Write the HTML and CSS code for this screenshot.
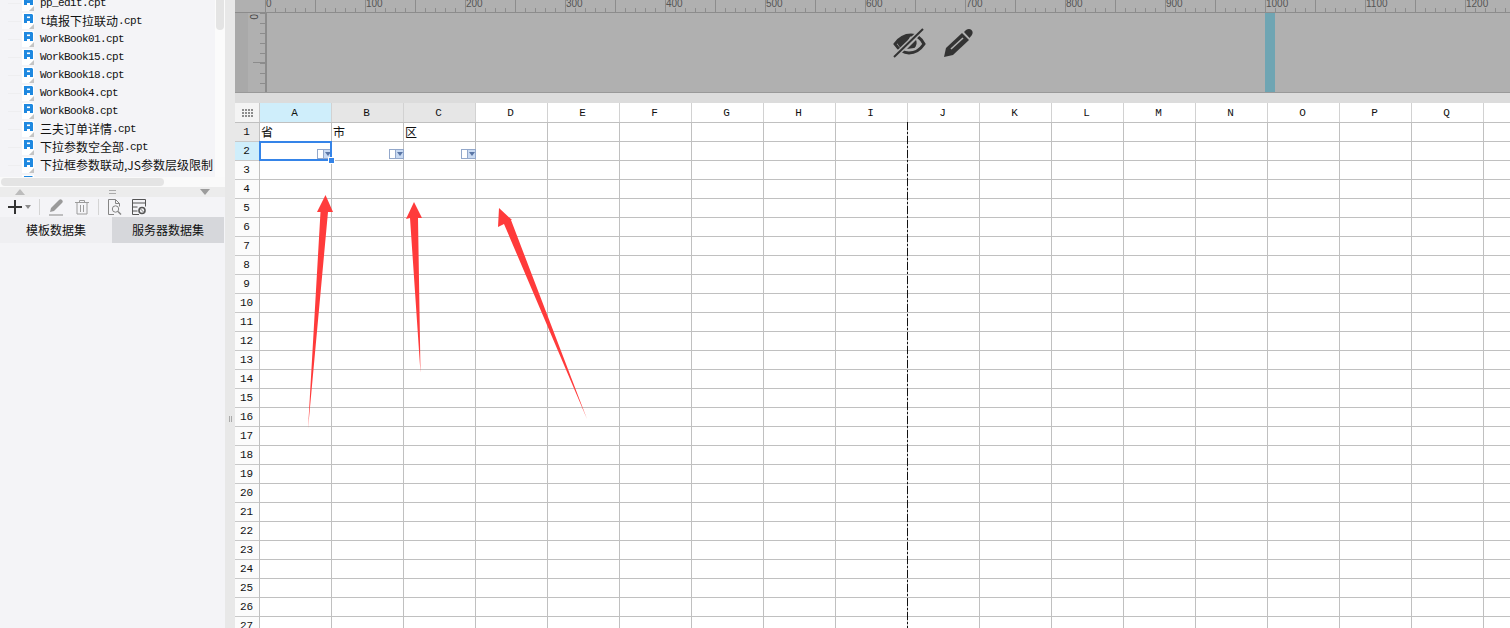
FILE: index.html
```html
<!DOCTYPE html>
<html lang="zh-CN">
<head>
  <meta charset="UTF-8">
  <title>模板设计器</title>
  <link rel="stylesheet" href="styles.css">
</head>
<body>

<svg class="defs" width="0" height="0">
  <symbol id="cpt" viewBox="0 0 12 16">
    <path d="M0 0h12v11l-5 5H0z" fill="#fff"/>
    <path d="M7 16l5-5v5z" fill="#c4c4c4"/>
    <path d="M2 1h8l1 1v8H8V8H5v2H2z" fill="#1e88e0"/>
    <rect x="5" y="3.500" width="3" height="1.600" fill="#fff"/>
  </symbol>
</svg>

<aside class="side">
  <div class="tree">
    <ul class="files">
      <li><svg class="file-icon"><use href="#cpt"/></svg><span class="lat">pp_edit.cpt</span></li>
      <li><svg class="file-icon"><use href="#cpt"/></svg><span class="lat">t</span>填报下拉联动<span class="lat">.cpt</span></li>
      <li><svg class="file-icon"><use href="#cpt"/></svg><span class="lat">WorkBook01.cpt</span></li>
      <li><svg class="file-icon"><use href="#cpt"/></svg><span class="lat">WorkBook15.cpt</span></li>
      <li><svg class="file-icon"><use href="#cpt"/></svg><span class="lat">WorkBook18.cpt</span></li>
      <li><svg class="file-icon"><use href="#cpt"/></svg><span class="lat">WorkBook4.cpt</span></li>
      <li><svg class="file-icon"><use href="#cpt"/></svg><span class="lat">WorkBook8.cpt</span></li>
      <li><svg class="file-icon"><use href="#cpt"/></svg>三夫订单详情<span class="lat">.cpt</span></li>
      <li><svg class="file-icon"><use href="#cpt"/></svg>下拉参数空全部<span class="lat">.cpt</span></li>
      <li><svg class="file-icon"><use href="#cpt"/></svg>下拉框参数联动,JS参数层级限制</li>
      <li><svg class="file-icon"><use href="#cpt"/></svg>下拉框参数联动,参数层级限制详情</li>
    </ul>
    <div class="vscroll"><div class="vthumb"></div></div>
  </div>
  <div class="hscroll"><div class="hthumb"></div></div>

  <div class="fold">
    <span class="tri-up"></span>
    <span class="grip"></span>
    <span class="tri-down"></span>
  </div>

  <div class="tools">
    <svg class="tool" width="16" height="16" viewBox="0 0 16 16"><path d="M8 1v14M1 8h14" stroke="#333" stroke-width="2" fill="none"/></svg>
    <span class="caret"></span>
    <span class="tool-sep"></span>
    <svg class="tool" width="18" height="18" viewBox="0 0 18 18"><path d="M2 14l1-4 8-8c1-1 2-1 3 0s1 2 0 3l-8 8z" fill="#9a9a9a"/><path d="M1 17h14" stroke="#9a9a9a" stroke-width="1.200"/></svg>
    <svg class="tool" width="16" height="16" viewBox="0 0 16 16" fill="none" stroke="#9c9c9c"><path d="M1 3.500h14M5.500 3.500v-2h5v2M3 3.500v11.500h10V3.500M6.500 6v7M9.500 6v7"/></svg>
    <span class="tool-sep"></span>
    <svg class="tool" width="16" height="16" viewBox="0 0 16 16" fill="none" stroke="#858585"><path d="M7 15.500H1.500V.5h7l4 4v3M8.500.5v4h4"/><circle cx="8.500" cy="10" r="3.200"/><path d="M11 12.500l3 3" stroke-width="1.500"/></svg>
    <svg class="tool" width="16" height="16" viewBox="0 0 16 16" fill="none" stroke="#555"><path d="M8 15.500H1.500V.5h13v7M1.500 4h13M1.500 8h5M1.500 12h5"/><circle cx="11" cy="11.500" r="3" stroke-width="1.600"/><path d="M9 9.500l4 4" stroke="#777"/></svg>
  </div>

  <div class="tabs">
    <div class="tab">模板数据集</div>
    <div class="tab tab-on">服务器数据集</div>
  </div>
</aside>

<div class="split"><span class="split-grip"></span></div>

<main class="main">
  <section class="designer">
    <div class="ruler-h">
      <div class="ruler-track">
        <span>0</span><span>100</span><span>200</span><span>300</span><span>400</span><span>500</span><span>600</span>
        <span>700</span><span>800</span><span>900</span><span>1000</span><span>1100</span><span>1200</span>
      </div>
    </div>
    <div class="stage">
      <div class="gutter"></div>
      <div class="ruler-v"><span>0</span></div>
      <div class="canvas">
        <svg width="33" height="30" viewBox="0 0 33 30">
          <path d="M2 16C7 9 13 7 18 7c6 0 10 3 13 9-4 6-9 9-15 9-6 0-10-3-14-9z" fill="none" stroke="#333" stroke-width="3"/>
          <path d="M4 15c4-5 8-7 14-8l-8 15c-3-2-4-4-6-7z" fill="#333"/>
          <path d="M23 12c1 2 1 6-2 8l-7 1z" fill="#333"/>
          <path d="M1 29L30 1" stroke="#b0b0b0" stroke-width="5"/>
          <path d="M1 29L30 1" stroke="#333" stroke-width="2"/>
        </svg>
        <svg width="32" height="30" viewBox="0 0 32 30">
          <path d="M0 29l2-9L18 5l7 7L9 27z" fill="#333"/>
          <path d="M7 21L19 10" stroke="#b0b0b0" stroke-width="1.600"/>
          <path d="M20 4l2-2c2-1.500 4-1.500 5.500 0s1.500 3.500 0 5.500l-2 2.500z" fill="#333"/>
        </svg>
      </div>
      <div class="paper-edge"></div>
      <div class="canvas-rest"></div>
    </div>
  </section>

  <div class="band"></div>

  <section class="sheet">
    <div class="col-heads">
      <div class="corner"><span class="dots"></span></div>
      <div class="col col-on">A</div>
      <div class="col col-used">B</div>
      <div class="col col-used">C</div>
      <div class="col">D</div><div class="col">E</div><div class="col">F</div><div class="col">G</div>
      <div class="col">H</div><div class="col">I</div><div class="col">J</div><div class="col">K</div>
      <div class="col">L</div><div class="col">M</div><div class="col">N</div><div class="col">O</div>
      <div class="col">P</div><div class="col">Q</div><div class="col">R</div>
    </div>
    <div class="sheet-body">
      <div class="row-heads">
        <div class="row row-used">1</div>
        <div class="row row-on">2</div>
        <div class="row">3</div><div class="row">4</div><div class="row">5</div><div class="row">6</div>
        <div class="row">7</div><div class="row">8</div><div class="row">9</div><div class="row">10</div>
        <div class="row">11</div><div class="row">12</div><div class="row">13</div><div class="row">14</div>
        <div class="row">15</div><div class="row">16</div><div class="row">17</div><div class="row">18</div>
        <div class="row">19</div><div class="row">20</div><div class="row">21</div><div class="row">22</div>
        <div class="row">23</div><div class="row">24</div><div class="row">25</div><div class="row">26</div>
        <div class="row">27</div>
      </div>
      <div class="cells">
        <div class="cell">省</div>
        <div class="cell">市</div>
        <div class="cell">区</div>
        <div class="cell cell-new"><span class="combo"><i></i><b></b></span></div>
        <div class="cell"><span class="combo"><i></i><b></b></span></div>
        <div class="cell"><span class="combo"><i></i><b></b></span></div>

        <div class="page-break"></div>
        <div class="selected"><span class="handle"></span></div>
      </div>
    </div>
  </section>
</main>

<svg class="arrows" width="1510" height="628" viewBox="0 0 1510 628">
  <path d="M308 429L320.500 212L317 212L325.500 195L333 212L328 212Z" fill="#ff3b3b"/>
  <path d="M420.500 373L410 218L406 219L414 202L422 218L418 218Z" fill="#ff3b3b"/>
  <path d="M587 419L504 224L498 227L499 208L512 220L511 220Z" fill="#ff3b3b"/>
</svg>

</body>
</html>
```

FILE: styles.css
```css
* {
  box-sizing: border-box;
}

html, body {
  height: 100%;
}

body {
  margin: 0;
  display: flex;
  height: 628px;
  overflow: hidden;
  background: #f4f4f7;
  color: #111;
  font-family: "Noto Sans CJK SC", sans-serif;
  font-size: 12px;
}

.defs {
  position: absolute;
}

/* left panel */
.side {
  width: 225px;
  flex: none;
  display: flex;
  flex-direction: column;
}

.tree {
  height: 177px;
  display: flex;
  overflow: hidden;
}

.files {
  list-style: none;
  margin: -6px 0 0;
  padding: 0;
  flex: 1;
  min-width: 0;
  white-space: nowrap;
  overflow: hidden;
}

.files li {
  height: 18px;
  line-height: 18px;
  display: flex;
  align-items: center;
  padding-left: 22px;
  background: linear-gradient(#eeeef0, #eeeef0) 8px 9px / 13px 1px no-repeat;
}

.file-icon {
  width: 12px;
  height: 16px;
  margin-right: 6px;
  flex: none;
}

.lat {
  font-family: "Liberation Mono", monospace;
  font-size: 11px;
  letter-spacing: -0.6px;
}

.vscroll {
  width: 10px;
  flex: none;
  background: #fbfbfb;
  padding-left: 1px;
}

.vthumb {
  width: 8px;
  height: 30px;
  background: #e4e4e4;
  border-radius: 0 0 4px 4px;
}

.hscroll {
  height: 10px;
  background: #fafafa;
  padding: 1px 0 0 1px;
}

.hthumb {
  width: 163px;
  height: 8px;
  background: #e4e4e4;
  border-radius: 4px;
}

.fold {
  height: 10px;
  background: #ececec;
  display: flex;
  align-items: center;
  justify-content: space-between;
  padding: 0 15px;
}

.tri-up {
  border: 5px solid transparent;
  border-top: 0;
  border-bottom: 6px solid #bcbcbc;
}

.tri-down {
  border: 5px solid transparent;
  border-bottom: 0;
  border-top: 6px solid #9c9c9c;
}

.grip {
  width: 7px;
  height: 4px;
  border-top: 1px solid #aaa;
  border-bottom: 1px solid #aaa;
}

.tools {
  height: 20px;
  display: flex;
  align-items: center;
  padding-left: 7px;
}

.tool {
  flex: none;
}

.tool + .tool {
  margin-left: 8px;
}

.caret {
  border: 3px solid transparent;
  border-bottom: 0;
  border-top: 4px solid #8c8c8c;
  margin-left: 2px;
}

.tool-sep {
  width: 1px;
  height: 16px;
  background: #d4d4d4;
  margin: 0 8px;
}

.tool-sep + .tool {
  margin-left: 0;
}

.tabs {
  height: 26px;
  display: flex;
  width: 224px;
}

.tab {
  width: 112px;
  line-height: 26px;
  text-align: center;
  background: #efeff2;
}

.tab-on {
  background: #d6d7db;
}

.split {
  width: 10px;
  flex: none;
  background: #e8e8e8;
  display: flex;
  align-items: center;
  justify-content: center;
  padding-top: 209px;
}

.split-grip {
  width: 3px;
  height: 6px;
  border-left: 1px solid #aaa;
  border-right: 1px solid #aaa;
}

.main {
  flex: 1;
  min-width: 0;
  display: flex;
  flex-direction: column;
  overflow: hidden;
  background: #fff;
}

/* greyed out designer on top */
.designer {
  height: 93px;
  flex: none;
  background: #b0b0b0;
  border-bottom: 1px solid #999;
  display: flex;
  flex-direction: column;
}

.ruler-h {
  height: 13px;
  flex: none;
  padding-left: 30px;
  border-bottom: 1px solid #8c8c8c;
  overflow: hidden;
}

.ruler-track {
  display: flex;
  height: 12px;
  background:
    repeating-linear-gradient(90deg, #8c8c8c 0 1px, transparent 1px 50px) 0 0 / 100% 100% no-repeat,
    repeating-linear-gradient(90deg, #8c8c8c 0 1px, transparent 1px 10px) 0 100% / 100% 4px no-repeat;
}

.ruler-track span {
  width: 100px;
  flex: none;
  padding-left: 1px;
  font: 10px/8px "Liberation Sans", sans-serif;
  color: #555;
}

.stage {
  flex: 1;
  display: flex;
  min-height: 0;
}

.gutter {
  width: 13px;
  flex: none;
  background: #a9a9a9;
}

.ruler-v {
  width: 17px;
  flex: none;
  background:
    linear-gradient(#8c8c8c, #8c8c8c) 100% 49px / 12px 1px no-repeat,
    repeating-linear-gradient(#8c8c8c 0 1px, transparent 1px 10px) 100% 0 / 5px 100% no-repeat;
}

.ruler-v span {
  display: block;
  writing-mode: vertical-rl;
  font: 10px/10px "Liberation Sans", sans-serif;
  color: #444;
  padding-top: 1px;
}

.canvas {
  width: 1000px;
  flex: none;
  border-left: 2px solid #8c8c8c;
  display: flex;
  align-items: flex-start;
  gap: 18px;
  padding: 15px 0 0 626px;
}

.paper-edge {
  width: 10px;
  flex: none;
  background: #6fa5b3;
}

.canvas-rest {
  flex: 1;
}

.band {
  height: 10px;
  flex: none;
  background: #dcdcdc;
}

/* spreadsheet */
.sheet {
  flex: 1;
  min-height: 0;
  overflow: hidden;
}

.col-heads {
  display: flex;
  height: 20px;
  border-bottom: 1px solid #c0c0c0;
  font-family: "Liberation Mono", monospace;
  font-size: 11px;
}

.corner {
  width: 25px;
  flex: none;
  background: #f4f4f4;
  border-right: 1px solid #c8c8c8;
  display: flex;
  align-items: center;
  justify-content: center;
}

.dots {
  width: 11px;
  height: 8px;
  background: radial-gradient(circle at 1px 1px, #8c8c8c 1px, transparent 1.1px) 0 0 / 3px 3px;
}

.col {
  width: 72px;
  flex: none;
  line-height: 21px;
  text-align: center;
  padding-right: 2px;
  border-right: 1px solid #d2d2d2;
  background: #fff;
}

.col-on {
  background: #cfeefb;
}

.col-used {
  background: #e6e6e6;
}

.sheet-body {
  display: flex;
}

.row-heads {
  width: 25px;
  flex: none;
  border-right: 1px solid #c0c0c0;
  font-family: "Liberation Mono", monospace;
  font-size: 11px;
}

.row {
  height: 19px;
  line-height: 19px;
  text-align: center;
  padding-right: 1px;
  border-bottom: 1px solid #c8c8c8;
  background: #fbfbfb;
}

.row-used {
  background: #e8e8e8;
}

.row-on {
  background: #cfeefb;
}

.cells {
  position: relative;
  width: 1296px;
  height: 513px;
  display: grid;
  grid-template-columns: repeat(18, 72px);
  grid-auto-rows: 19px;
  background:
    repeating-linear-gradient(90deg, transparent 0 71px, #c0c0c0 71px 72px),
    repeating-linear-gradient(transparent 0 18px, #c0c0c0 18px 19px);
}

.cell {
  padding: 0 0 2px 1px;
  line-height: 20px;
  display: flex;
  align-items: flex-end;
  justify-content: flex-end;
}

.cell:nth-child(-n+3) {
  justify-content: flex-start;
  align-items: center;
  padding-bottom: 1px;
}

.cell-new {
  grid-column: 1;
}

.combo {
  display: flex;
  width: 15px;
  height: 10px;
  border: 1px solid #93a8cb;
}

.combo i {
  width: 6px;
  background: #fff;
  border-right: 1px solid #93a8cb;
}

.combo b {
  flex: 1;
  background: #c9daf2;
  position: relative;
}

.combo b::after {
  content: "";
  position: absolute;
  left: 1px;
  top: 2px;
  border: 3px solid transparent;
  border-bottom: 0;
  border-top: 4px solid #5a76a6;
}

.page-break {
  position: absolute;
  left: 647px;
  top: -1px;
  bottom: 0;
  width: 1px;
  background: repeating-linear-gradient(#111 0 8px, transparent 8px 10px, #111 10px 12px, transparent 12px 14px);
}

.selected {
  position: absolute;
  left: -1px;
  top: 18px;
  width: 73px;
  height: 20px;
  border: 2px solid #3584e8;
}

.handle {
  position: absolute;
  right: -4px;
  bottom: -4px;
  width: 5px;
  height: 5px;
  background: #3584e8;
  box-shadow: 0 0 0 1px #fff;
}

.arrows {
  position: absolute;
  left: 0;
  top: 0;
  pointer-events: none;
}
```
